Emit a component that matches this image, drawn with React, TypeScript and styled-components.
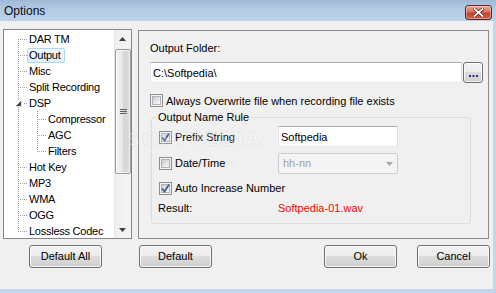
import React from 'react';
import styled, { createGlobalStyle } from 'styled-components';

const Global = createGlobalStyle`
  html, body { margin: 0; padding: 0; background: #c4d7ec; }
  body {
    font-family: "Liberation Sans", Arial, sans-serif;
    font-size: 11px;
    color: #000;
  }
  * { box-sizing: border-box; }
`;

const Window = styled.div`
  position: relative;
  width: 496px;
  height: 293px;
  display: flex;
  flex-direction: column;
  background: #c3d7ec;
  overflow: hidden;
`;

const TitleBar = styled.div`
  height: 21px;
  flex: none;
  display: flex;
  align-items: center;
  justify-content: space-between;
  padding-left: 4px;
  background: linear-gradient(#9fb9d6, #b3cbe5 45%, #bcd2ea);
`;

const Title = styled.span`
  font-family: "Liberation Sans", Arial, sans-serif;
  font-size: 12px;
  color: #0c0c0c;
  margin-top: 1px;
`;

const CloseBtn = styled.div`
  width: 27px;
  height: 15px;
  margin-right: 4px;
  margin-top: 3px;
  border: 1px solid #5b2a24;
  border-radius: 3px;
  background: linear-gradient(#e9a89a, #d9735f 45%, #c5432d 55%, #d2624a);
  display: flex;
  align-items: center;
  justify-content: center;
  box-shadow: inset 0 0 0 1px rgba(255, 255, 255, 0.35);
`;

const Body = styled.div`
  flex: 1;
  margin: 0 3px 4px 0;
  background: #f0f0f0;
  display: flex;
  flex-direction: column;
`;

const Content = styled.div`
  display: flex;
  align-items: flex-start;
  margin-top: 8px;
  margin-left: 3px;
`;

const TreeBox = styled.div`
  width: 129px;
  height: 210px;
  border: 1px solid #828790;
  background: #fff;
  display: flex;
`;

const TreeList = styled.div`
  flex: 1;
  padding-top: 1px;
  display: flex;
  flex-direction: column;
`;

const TreeRowEl = styled.div`
  height: 16px;
  display: flex;
  align-items: center;
`;

const Gutter = styled.svg`
  flex: none;
  display: block;
`;

const TreeLabel = styled.span<{ $selected?: boolean }>`
  height: 15px;
  line-height: 13px;
  padding: 0 3px 0 1px;
  border: 1px solid ${(p) => (p.$selected ? '#a8d8f5' : 'transparent')};
  border-radius: 2px;
  background: ${(p) => (p.$selected ? 'linear-gradient(#f2f9fe, #dff0fb)' : 'transparent')};
  white-space: nowrap;
  letter-spacing: -0.25px;
`;

const ScrollBar = styled.div`
  width: 17px;
  height: 100%;
  flex: none;
  background: linear-gradient(90deg, #e3e3e3, #f0f0f0 2px, #f4f4f4);
  display: flex;
  flex-direction: column;
  align-items: center;
`;

const ScrollArrow = styled.div`
  width: 17px;
  height: 17px;
  flex: none;
  display: flex;
  align-items: center;
  justify-content: center;
`;

const Thumb = styled.div`
  width: 16px;
  height: 125px;
  margin-top: 2px;
  margin-left: 1px;
  border: 1px solid #9a9a9a;
  border-radius: 2px;
  background: linear-gradient(90deg, #f4f4f4, #e8e8e8 45%, #d6d6d6 55%, #dcdcdc);
  display: flex;
  align-items: center;
  justify-content: center;
  box-shadow: inset 0 0 0 1px rgba(255, 255, 255, 0.6);
`;

const TrackFill = styled.div`
  flex: 1;
`;

const Panel = styled.div`
  width: 351px;
  height: 209px;
  margin-top: 1px;
  margin-left: 6px;
  border: 1px solid #898c95;
  padding-left: 11px;
  display: flex;
  flex-direction: column;
`;

const Label = styled.div<{ $mt?: number }>`
  line-height: 13px;
  height: 13px;
  margin-top: ${(p) => p.$mt ?? 0}px;
  white-space: nowrap;
`;

const FieldRow = styled.div`
  display: flex;
  gap: 1px;
  margin-top: 7px;
`;

const TextInput = styled.div<{ $w: number }>`
  width: ${(p) => p.$w}px;
  height: 21px;
  border: 1px solid;
  border-color: #abadb3 #dbdfe6 #e3e9ef #e2e3ea;
  background: #fff;
  padding-left: 2px;
  display: flex;
  align-items: center;
  white-space: nowrap;
`;

const SmallButton = styled.div`
  width: 20px;
  height: 21px;
  border: 1px solid #707070;
  border-radius: 3px;
  background: linear-gradient(#f2f2f2, #ebebeb 50%, #dddddd 50%, #cfcfcf);
  box-shadow: inset 0 0 0 1px rgba(255, 255, 255, 0.7);
  display: flex;
  align-items: flex-end;
  justify-content: center;
  padding-bottom: 5px;
`;

const CheckRow = styled.div<{ $mt?: number }>`
  display: flex;
  align-items: center;
  height: 13px;
  margin-top: ${(p) => p.$mt ?? 0}px;
  white-space: nowrap;
`;

const Box = styled.span`
  width: 13px;
  height: 13px;
  flex: none;
  border: 1px solid #8e8f8f;
  background: #f4f4f4;
  padding: 1px;
  display: inline-flex;
  margin-right: 3px;
`;

const BoxInner = styled.span`
  flex: 1;
  border: 1px solid #b0b4ba;
  background: linear-gradient(135deg, #c9ccd1, #e9eaec 60%, #f7f7f7);
  position: relative;
`;

const CheckSvg = styled.svg`
  position: absolute;
  left: -2px;
  top: -2px;
`;

const Group = styled.fieldset`
  width: 320px;
  height: 113px;
  margin: 4px 0 0 1px;
  padding: 2px 0 0 7px;
  border: 1px solid #d5dfe5;
  border-radius: 3px;
  min-width: 0;
`;

const Legend = styled.legend`
  padding: 0 2px;
  margin-left: -3px;
  line-height: 13px;
  height: 13px;
`;

const GroupGrid = styled.div`
  display: grid;
  grid-template-columns: 119px 120px;
  align-items: center;
`;

const Cell = styled.div<{ $mt?: number; $span?: boolean; $ml?: number }>`
  margin-top: ${(p) => p.$mt ?? 0}px;
  margin-left: ${(p) => p.$ml ?? 0}px;
  grid-column: ${(p) => (p.$span ? '1 / span 2' : 'auto')};
  height: ${(p) => (p.$span ? 13 : 'auto')};
  line-height: 13px;
  display: flex;
  align-items: center;
  white-space: nowrap;
`;

const Select = styled.div`
  width: 120px;
  height: 21px;
  border: 1px solid #c9cdd2;
  border-radius: 2px;
  background: #f4f4f4;
  color: #a3a3a3;
  padding-left: 4px;
  display: flex;
  align-items: center;
  justify-content: space-between;
`;

const SelectArrow = styled.svg`
  margin-right: 4px;
`;

const ResultText = styled.span`
  color: #ff0000;
`;

const ButtonRow = styled.div`
  display: flex;
  justify-content: space-between;
  margin: 6px 3px 0 29px;
`;

const ButtonGroup = styled.div<{ $gap: number }>`
  display: flex;
  gap: ${(p) => p.$gap}px;
`;

const Button = styled.div`
  width: 73px;
  height: 23px;
  border: 1px solid #707070;
  border-radius: 3px;
  background: linear-gradient(#f2f2f2, #ebebeb 50%, #dddddd 50%, #cfcfcf);
  box-shadow: inset 0 0 0 1px rgba(255, 255, 255, 0.75);
  display: flex;
  align-items: center;
  justify-content: center;
  padding-bottom: 1px;
`;

const Watermark = styled.div`
  position: absolute;
  left: 126px;
  top: 127px;
  font-family: "DejaVu Sans", sans-serif;
  font-size: 20px;
  font-weight: bold;
  letter-spacing: 1px;
  color: rgba(255, 255, 255, 0.2);
  -webkit-text-stroke: 1px rgba(150, 150, 150, 0.12);
  pointer-events: none;
`;

const WatermarkUrl = styled.div`
  position: absolute;
  left: 158px;
  top: 158px;
  font-family: "Liberation Sans", sans-serif;
  font-size: 9px;
  color: rgba(150, 150, 150, 0.12);
  pointer-events: none;
`;

type Row = {
  label: string;
  level: 0 | 1;
  first?: boolean;
  last?: boolean;
  expander?: boolean;
  subLast?: boolean;
  selected?: boolean;
};

const rows: Row[] = [
  { label: 'DAR TM', level: 0, first: true },
  { label: 'Output', level: 0, selected: true },
  { label: 'Misc', level: 0 },
  { label: 'Split Recording', level: 0 },
  { label: 'DSP', level: 0, expander: true },
  { label: 'Compressor', level: 1 },
  { label: 'AGC', level: 1 },
  { label: 'Filters', level: 1, subLast: true },
  { label: 'Hot Key', level: 0 },
  { label: 'MP3', level: 0 },
  { label: 'WMA', level: 0 },
  { label: 'OGG', level: 0 },
  { label: 'Lossless Codec', level: 0, last: true },
];

const DOT = '#a0a0a0';

function Dots({ x1, y1, x2, y2 }: { x1: number; y1: number; x2: number; y2: number }) {
  const pts: React.ReactNode[] = [];
  if (x1 === x2) {
    for (let y = y1; y <= y2; y += 2) pts.push(<rect key={y} x={x1} y={y} width={1} height={1} fill={DOT} />);
  } else {
    for (let x = x1; x <= x2; x += 2) pts.push(<rect key={x} x={x} y={y1} width={1} height={1} fill={DOT} />);
  }
  return <>{pts}</>;
}

function TreeRow({ row }: { row: Row }) {
  const w = row.level === 0 ? 23 : 42;
  return (
    <TreeRowEl>
      <Gutter width={w} height={16} viewBox={`0 0 ${w} 16`}>
        <Dots x1={14} y1={row.first ? 8 : 0} x2={14} y2={row.last ? 8 : 15} />
        {row.level === 0 && !row.expander && <Dots x1={16} y1={8} x2={22} y2={8} />}
        {row.expander && (
          <>
            <rect x={12} y={5} width={7} height={7} fill="#fff" />
            <polygon points="17,6 17,11 12,11" fill="#3c3c3c" stroke="#7a7a7a" strokeWidth={0.5} />
            <Dots x1={20} y1={8} x2={22} y2={8} />
          </>
        )}
        {row.level === 1 && (
          <>
            <Dots x1={33} y1={0} x2={33} y2={row.subLast ? 8 : 15} />
            <Dots x1={35} y1={8} x2={41} y2={8} />
          </>
        )}
      </Gutter>
      <TreeLabel $selected={row.selected}>{row.label}</TreeLabel>
    </TreeRowEl>
  );
}

function CheckBox({ checked }: { checked?: boolean }) {
  return (
    <Box>
      <BoxInner>
        {checked && (
          <CheckSvg width={11} height={11} viewBox="0 0 11 11">
            <path d="M2 5.5 L4.5 8.5 L9 1.5" fill="none" stroke="#3d5a8f" strokeWidth={1.7} />
          </CheckSvg>
        )}
      </BoxInner>
    </Box>
  );
}

export default function App() {
  return (
    <Window>
      <Global />
      <TitleBar>
        <Title>Options</Title>
        <CloseBtn>
          <svg width="11" height="9" viewBox="0 0 11 9">
            <path d="M1.5 1 L9.5 8 M9.5 1 L1.5 8" stroke="#4a1a14" strokeWidth={3.2} strokeLinecap="square" />
            <path d="M1.5 1 L9.5 8 M9.5 1 L1.5 8" stroke="#ffffff" strokeWidth={1.8} strokeLinecap="square" />
          </svg>
        </CloseBtn>
      </TitleBar>
      <Body>
        <Content>
          <TreeBox>
            <TreeList>
              {rows.map((r) => (
                <TreeRow key={r.label} row={r} />
              ))}
            </TreeList>
            <ScrollBar>
              <ScrollArrow>
                <svg width="7" height="4" viewBox="0 0 7 4">
                  <polygon points="3.5,0 7,4 0,4" fill="#404040" />
                </svg>
              </ScrollArrow>
              <Thumb>
                <svg width="7" height="6" viewBox="0 0 7 6">
                  <rect x="0" y="0" width="7" height="1" fill="#5e5e5e" />
                  <rect x="0" y="2" width="7" height="1" fill="#5e5e5e" />
                  <rect x="0" y="4" width="7" height="1" fill="#5e5e5e" />
                  <rect x="0" y="5" width="7" height="1" fill="#e8e8e8" />
                </svg>
              </Thumb>
              <TrackFill />
              <ScrollArrow>
                <svg width="7" height="4" viewBox="0 0 7 4">
                  <polygon points="0,0 7,0 3.5,4" fill="#404040" />
                </svg>
              </ScrollArrow>
            </ScrollBar>
          </TreeBox>
          <Panel>
            <Label $mt={11}>Output Folder:</Label>
            <FieldRow>
              <TextInput $w={312}>C:\Softpedia\</TextInput>
              <SmallButton>
                <svg width="9" height="2" viewBox="0 0 9 2">
                  <rect x="0" y="0" width="2" height="2" fill="#40267a" />
                  <rect x="3.5" y="0" width="2" height="2" fill="#40267a" />
                  <rect x="7" y="0" width="2" height="2" fill="#40267a" />
                </svg>
              </SmallButton>
            </FieldRow>
            <CheckRow $mt={11}>
              <CheckBox />
              Always Overwrite file when recording file exists
            </CheckRow>
            <Group>
              <Legend>Output Name Rule</Legend>
              <GroupGrid>
                <Cell $mt={2}>
                  <CheckBox checked />
                  Prefix String
                </Cell>
                <TextInput $w={120}>Softpedia</TextInput>
                <Cell $mt={6}>
                  <CheckBox />
                  Date/Time
                </Cell>
                <Cell $mt={6}>
                  <Select>
                    hh-nn
                    <SelectArrow width="7" height="4" viewBox="0 0 7 4">
                      <polygon points="0,0 7,0 3.5,4" fill="#a8a8a8" />
                    </SelectArrow>
                  </Select>
                </Cell>
                <Cell $mt={8} $span>
                  <CheckBox checked />
                  Auto Increase Number
                </Cell>
                <Cell $mt={7} $ml={-1}>Result:</Cell>
                <Cell $mt={7}>
                  <ResultText>Softpedia-01.wav</ResultText>
                </Cell>
              </GroupGrid>
            </Group>
          </Panel>
        </Content>
        <ButtonRow>
          <ButtonGroup $gap={37}>
            <Button>Default All</Button>
            <Button>Default</Button>
          </ButtonGroup>
          <ButtonGroup $gap={20}>
            <Button>Ok</Button>
            <Button>Cancel</Button>
          </ButtonGroup>
        </ButtonRow>
      </Body>
      <Watermark>SOFTPEDIA</Watermark>
      <WatermarkUrl>www.softpedia.com</WatermarkUrl>
    </Window>
  );
}
